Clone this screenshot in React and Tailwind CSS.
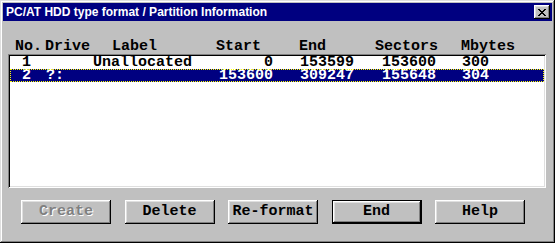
import React from "react";

const font = "font-['Liberation_Mono',monospace] font-bold text-[15px]";
const raised =
  "shadow-[inset_-1px_-1px_0_#000,inset_1px_1px_0_#fff,inset_-2px_-2px_0_#808080,inset_2px_2px_0_#dfdfdf]";

function Btn({ children, disabled, def }) {
  return (
    <div
      className={`w-[90px] h-[24px] bg-[#c0c0c0] flex items-center justify-center ${
        def ? "border border-black" : ""
      }`}
    >
      <div className={`w-full h-full flex items-center justify-center ${raised}`}>
        <span
          className={`${font} leading-[16px] ${
            disabled ? "text-[#808080] [text-shadow:1px_1px_0_#fff]" : "text-black"
          }`}
        >
          {children}
        </span>
      </div>
    </div>
  );
}

function Row({ no, drive, label, start, end, sectors, mb, selected }) {
  return (
    <div
      className={`flex h-[13px] items-center pl-[12px] ${font} leading-[13px] ${
        selected
          ? "bg-[#000080] text-white outline-1 outline-dotted outline-[#ffff00] -outline-offset-1"
          : "text-black"
      }`}
    >
      <span className="w-[24px]">{no}</span>
      <span className="w-[47px]">{drive}</span>
      <span className="w-[100px]">{label}</span>
      <span className="w-[80px] text-right">{start}</span>
      <span className="w-[81px] text-right">{end}</span>
      <span className="w-[82px] text-right">{sectors}</span>
      <span className="pl-[26px]">{mb}</span>
    </div>
  );
}

export default function App() {
  return (
    <div className="w-[555px] h-[243px] bg-[#c0c0c0] p-[3px] flex flex-col shadow-[inset_-1px_-1px_0_#000,inset_1px_1px_0_#dfdfdf,inset_-2px_-2px_0_#808080,inset_2px_2px_0_#fff]">
      <div className="h-[18px] bg-[#000080] flex items-center pl-[3px] pr-[2px]">
        <span className="font-['Liberation_Sans',Arial,sans-serif] font-bold text-[12px] text-white leading-none">
          PC/AT HDD type format / Partition Information
        </span>
        <div className={`ml-auto w-[16px] h-[14px] bg-[#c0c0c0] flex items-center justify-center ${raised}`}>
          <svg width="8" height="7" viewBox="0 0 8 7" shapeRendering="crispEdges">
            <path
              d="M0 0h2v1h-2zM6 0h2v1h-2zM1 1h2v1h-2zM5 1h2v1h-2zM2 2h4v1h-4zM3 3h2v1h-2zM2 4h4v1h-4zM1 5h2v1h-2zM5 5h2v1h-2zM0 6h2v1h-2zM6 6h2v1h-2z"
              fill="#000"
            />
          </svg>
        </div>
      </div>

      <div className={`mt-[19px] h-[13px] flex pl-[12px] text-black ${font} leading-[13px]`}>
        <span className="w-[30px]">No.</span>
        <span className="w-[67px]">Drive</span>
        <span className="w-[104px]">Label</span>
        <span className="w-[83px]">Start</span>
        <span className="w-[76px]">End</span>
        <span className="w-[86px]">Sectors</span>
        <span>Mbytes</span>
      </div>

      <div className="ml-[5px] mt-[1px] w-[538px] h-[134px] bg-white p-[2px] shadow-[inset_1px_1px_0_#808080,inset_-1px_-1px_0_#fff,inset_2px_2px_0_#000,inset_-2px_-2px_0_#dfdfdf]">
        <Row no="1" drive="" label="Unallocated" start="0" end="153599" sectors="153600" mb="300" />
        <Row no="2" drive="?:" label="" start="153600" end="309247" sectors="155648" mb="304" selected />
      </div>

      <div className="mt-[12px] ml-[18px] w-[504px] flex justify-between">
        <Btn disabled>Create</Btn>
        <Btn>Delete</Btn>
        <Btn>Re-format</Btn>
        <Btn def>End</Btn>
        <Btn>Help</Btn>
      </div>
    </div>
  );
}
